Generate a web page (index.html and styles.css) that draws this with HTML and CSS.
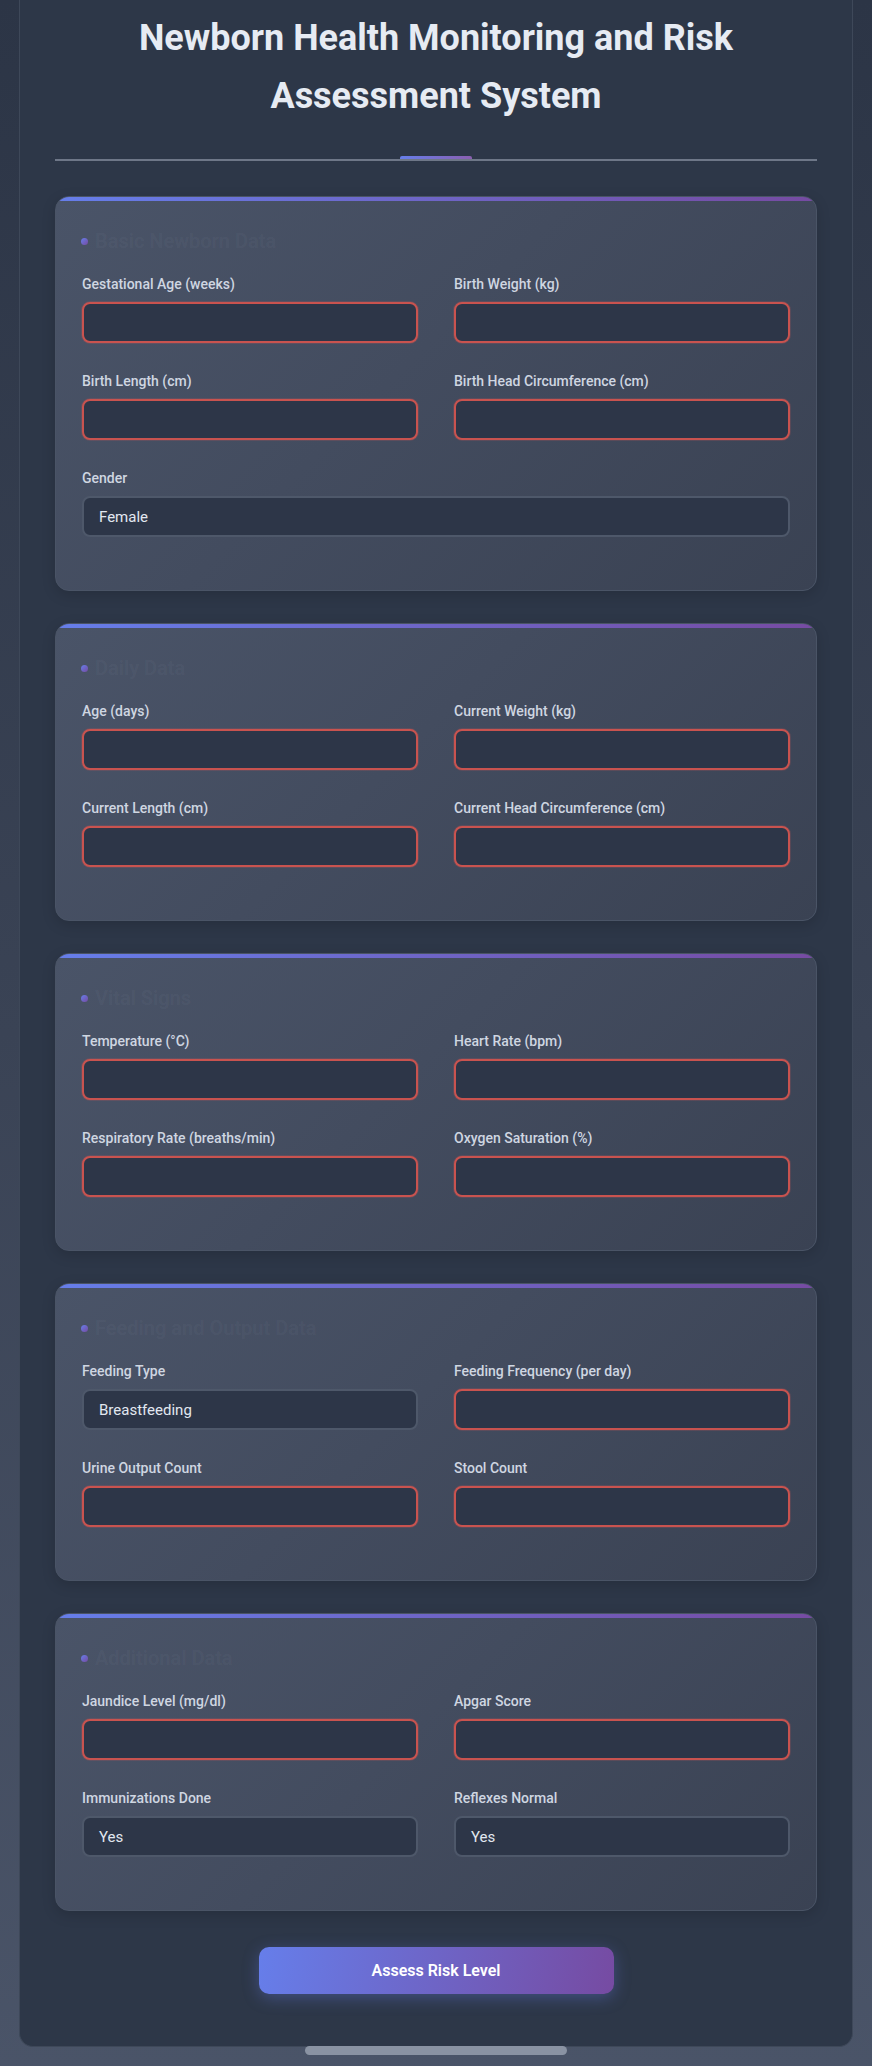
FILE: index.html
```html
<!DOCTYPE html>
<html lang="en">
<head>
<meta charset="utf-8">
<title>Newborn Health Monitoring and Risk Assessment System</title>
<link rel="stylesheet" href="styles.css">
</head>
<body>
<div class="page">
  <main class="container">
    <header class="header">
      <h1 class="title">Newborn Health Monitoring and Risk Assessment System</h1>
    </header>
    <form class="form">
      <section class="card">
        <h2 class="card-title"><span class="dot"></span>Basic Newborn Data</h2>
        <div class="grid">
          <div class="field"><label class="label">Gestational Age (weeks)</label><input class="input req" type="text"></div>
          <div class="field"><label class="label">Birth Weight (kg)</label><input class="input req" type="text"></div>
          <div class="field"><label class="label">Birth Length (cm)</label><input class="input req" type="text"></div>
          <div class="field"><label class="label">Birth Head Circumference (cm)</label><input class="input req" type="text"></div>
          <div class="field full"><label class="label">Gender</label><div class="input select">Female</div></div>
        </div>
      </section>
      <section class="card">
        <h2 class="card-title"><span class="dot"></span>Daily Data</h2>
        <div class="grid">
          <div class="field"><label class="label">Age (days)</label><input class="input req" type="text"></div>
          <div class="field"><label class="label">Current Weight (kg)</label><input class="input req" type="text"></div>
          <div class="field"><label class="label">Current Length (cm)</label><input class="input req" type="text"></div>
          <div class="field"><label class="label">Current Head Circumference (cm)</label><input class="input req" type="text"></div>
        </div>
      </section>
      <section class="card">
        <h2 class="card-title"><span class="dot"></span>Vital Signs</h2>
        <div class="grid">
          <div class="field"><label class="label">Temperature (°C)</label><input class="input req" type="text"></div>
          <div class="field"><label class="label">Heart Rate (bpm)</label><input class="input req" type="text"></div>
          <div class="field"><label class="label">Respiratory Rate (breaths/min)</label><input class="input req" type="text"></div>
          <div class="field"><label class="label">Oxygen Saturation (%)</label><input class="input req" type="text"></div>
        </div>
      </section>
      <section class="card">
        <h2 class="card-title"><span class="dot"></span>Feeding and Output Data</h2>
        <div class="grid">
          <div class="field"><label class="label">Feeding Type</label><div class="input select">Breastfeeding</div></div>
          <div class="field"><label class="label">Feeding Frequency (per day)</label><input class="input req" type="text"></div>
          <div class="field"><label class="label">Urine Output Count</label><input class="input req" type="text"></div>
          <div class="field"><label class="label">Stool Count</label><input class="input req" type="text"></div>
        </div>
      </section>
      <section class="card">
        <h2 class="card-title"><span class="dot"></span>Additional Data</h2>
        <div class="grid">
          <div class="field"><label class="label">Jaundice Level (mg/dl)</label><input class="input req" type="text"></div>
          <div class="field"><label class="label">Apgar Score</label><input class="input req" type="text"></div>
          <div class="field"><label class="label">Immunizations Done</label><div class="input select">Yes</div></div>
          <div class="field"><label class="label">Reflexes Normal</label><div class="input select">Yes</div></div>
        </div>
      </section>
      <div class="actions">
        <button class="btn" type="button">Assess Risk Level</button>
      </div>
    </form>
  </main>
  <div class="scroll-pill"></div>
</div>
</body>
</html>
```
FILE: styles.css
```css
* { box-sizing: border-box; }
html, body { margin: 0; padding: 0; }
body {
  min-height: 2066px;
  background: linear-gradient(180deg, #2c3546 0%, #3a4355 50%, #4a5468 100%);
  font-family: Roboto, "Noto Sans", "Liberation Sans", sans-serif;
  color: #e2e8f0;
}
.page {
  display: flex;
  flex-direction: column;
  align-items: center;
}
.container {
  width: 834px;
  margin: 0 19px;
  background: #2d3748;
  border: 1px solid #3e4859;
  border-top: none;
  border-radius: 0 0 14px 14px;
  padding: 0 35px 35px;
}
.header {
  position: relative;
  padding: 10px 0 34px;
  border-bottom: 2px solid #6e7788;
  margin-bottom: 35px;
}
.header::after {
  content: "";
  position: absolute;
  left: 50%;
  bottom: 0;
  width: 72px;
  height: 3px;
  margin-left: -36px;
  border-radius: 2px 2px 0 0;
  background: linear-gradient(90deg, #667eea, #8a5fb0);
}
.title {
  margin: 0;
  text-align: center;
  font-size: 36px;
  line-height: 57.6px;
  font-weight: 700;
  color: #e6ebf3;
  padding: 0 80px;
}
.form {
  display: flex;
  flex-direction: column;
  gap: 32px;
}
.card {
  position: relative;
  overflow: hidden;
  border: 1px solid #4a5466;
  border-radius: 14px;
  background: linear-gradient(135deg, #4a5468 0%, #434c5f 45%, #3a4253 100%);
  padding: 30px 26px 53px;
  box-shadow: 0 4px 14px rgba(0, 0, 0, 0.15);
}
.card::before {
  content: "";
  position: absolute;
  top: 0;
  left: 0;
  right: 0;
  height: 4px;
  background: linear-gradient(90deg, #667eea 0%, #764ba2 100%);
}
.card-title {
  display: flex;
  align-items: center;
  gap: 7px;
  margin: 0 0 18px;
  font-size: 20px;
  line-height: 29px;
  font-weight: 600;
  color: rgba(226, 232, 240, 0.055);
}
.dot {
  width: 7px;
  height: 7px;
  margin-left: -1px;
  border-radius: 50%;
  background: linear-gradient(135deg, #667eea, #764ba2);
}
.grid {
  display: grid;
  grid-template-columns: 1fr 1fr;
  column-gap: 36px;
  row-gap: 28px;
}
.full { grid-column: 1 / -1; }
.field {
  display: flex;
  flex-direction: column;
  gap: 8px;
}
.label {
  font-size: 14px;
  line-height: 20px;
  font-weight: 500;
  color: #cfd6e1;
}
.input {
  display: flex;
  align-items: center;
  height: 41px;
  width: 100%;
  padding: 0 14px;
  border-radius: 8px;
  border: 2px solid #4e586a;
  background: #2d3648;
  font-family: inherit;
  font-size: 15px;
  color: #e2e8f0;
  outline: none;
}
.input.req {
  border-color: #c9534f;
  box-shadow: 0 0 0 1px rgba(220, 90, 90, 0.18);
}
.select {
  padding-left: 15px;
}
.actions {
  display: flex;
  justify-content: center;
  padding: 4px 0 17px;
}
.btn {
  width: 355px;
  height: 47px;
  border: none;
  border-radius: 10px;
  background: linear-gradient(100deg, #667eea 0%, #764ba2 100%);
  color: #ffffff;
  font-family: inherit;
  font-size: 16px;
  font-weight: 600;
  box-shadow: 0 4px 16px rgba(102, 126, 234, 0.35);
}
.scroll-pill {
  width: 262px;
  height: 9px;
  margin-top: -1px;
  border-radius: 5px;
  background: #8a93a3;
}
```
